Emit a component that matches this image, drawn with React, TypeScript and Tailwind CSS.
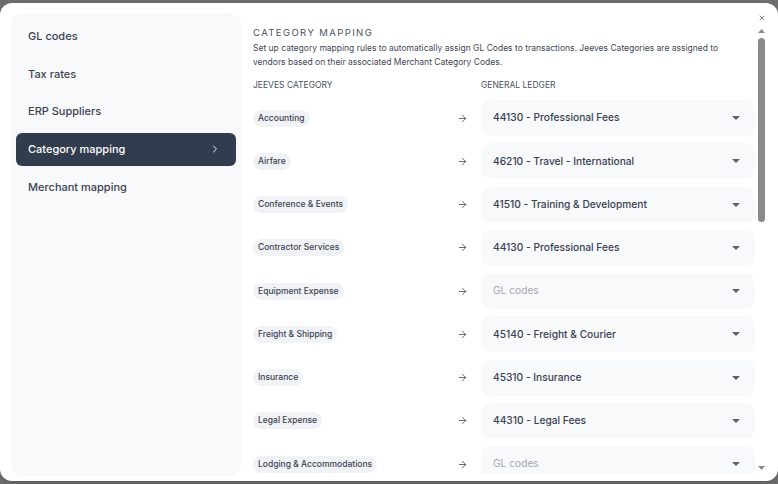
import { ChevronRight, ArrowRight, X } from 'lucide-react';

const navItems = ['GL codes', 'Tax rates', 'ERP Suppliers', 'Category mapping', 'Merchant mapping'];

const rows: { category: string; gl: string | null }[] = [
  { category: 'Accounting', gl: '44130 - Professional Fees' },
  { category: 'Airfare', gl: '46210 - Travel - International' },
  { category: 'Conference & Events', gl: '41510 - Training & Development' },
  { category: 'Contractor Services', gl: '44130 - Professional Fees' },
  { category: 'Equipment Expense', gl: null },
  { category: 'Freight & Shipping', gl: '45140 - Freight & Courier' },
  { category: 'Insurance', gl: '45310 - Insurance' },
  { category: 'Legal Expense', gl: '44310 - Legal Fees' },
  { category: 'Lodging & Accommodations', gl: null },
];

function Caret() {
  return (
    <svg width="8" height="4" viewBox="0 0 8 4" className="shrink-0">
      <path d="M0 0h8L4 4z" fill="#5b6170" />
    </svg>
  );
}

export default function App() {
  const active = 'Category mapping';

  return (
    <div className="h-[484px] w-[778px] overflow-hidden bg-[#6d6d6d] pt-[3px] font-['Inter',sans-serif]">
      <div className="relative flex h-[478px] rounded-[12px] bg-white pl-[11px] pt-[10px] shadow-md">
        <aside className="flex h-[463px] w-[230px] shrink-0 flex-col gap-[4.75px] rounded-[12px] bg-[#f8f9fb] px-[5px] pt-[6.5px]">
          {navItems.map((item) => (
            <div
              key={item}
              className={`flex h-[33px] items-center justify-between rounded-[6px] pl-[12px] pr-[15px] text-[11px] font-medium ${
                item === active ? 'bg-[#323c4f] text-white' : 'text-[#3b4252]'
              }`}
            >
              {item}
              {item === active && <ChevronRight className="h-[12px] w-[12px]" strokeWidth={1.8} />}
            </div>
          ))}
        </aside>

        <main className="ml-[12px] h-[461px] flex-1 overflow-hidden pt-[13px]">
          <h2 className="text-[9.5px] leading-[14px] tracking-[1.4px] text-[#4b5262]">CATEGORY MAPPING</h2>
          <p className="mt-[1px] max-w-[485px] text-[8.5px] leading-[14px] text-[#3f4656]">
            Set up category mapping rules to automatically assign GL Codes to transactions. Jeeves Categories are assigned to vendors based on their associated Merchant Category Codes.
          </p>

          <div className="mt-[10px] flex text-[8.5px] leading-[12px] text-[#4b5262]">
            <span className="w-[228px]">JEEVES CATEGORY</span>
            <span>GENERAL LEDGER</span>
          </div>

          <div className="mt-[9px] flex flex-col gap-[7.25px]">
            {rows.map((r) => (
              <div key={r.category} className="flex h-[36px] items-center">
                <div className="flex w-[204px] items-center">
                  <span className="flex h-[17px] items-center rounded-full bg-[#f1f2f6] px-[5px] text-[8.5px] font-medium text-[#3b4252]">
                    {r.category}
                  </span>
                </div>
                <ArrowRight className="h-[11px] w-[11px] text-[#3b4252]" strokeWidth={1.7} />
                <div className="ml-[13px] flex h-[36px] w-[274px] items-center justify-between rounded-[10px] bg-[#f8f9fb] pl-[12px] pr-[15px]">
                  <span className={`text-[10.2px] font-medium ${r.gl ? 'text-[#374151]' : 'font-normal text-[#a3a8b3]'}`}>
                    {r.gl ?? 'GL codes'}
                  </span>
                  <Caret />
                </div>
              </div>
            ))}
          </div>
        </main>

        <div className="ml-[2px] mr-[12px] flex w-[9px] shrink-0 flex-col items-center pt-[16px]">
          <svg width="7" height="4" viewBox="0 0 7 4">
            <path d="M0 4h7L3.5 0z" fill="#8a8a8a" />
          </svg>
          <div className="mt-[5px] h-[184px] w-[7px] rounded-full bg-[#8a8a8a]" />
          <div className="flex-1" />
          <svg width="7" height="4" viewBox="0 0 7 4" className="mb-[11px]">
            <path d="M0 0h7L3.5 4z" fill="#8a8a8a" />
          </svg>
        </div>

        <button className="absolute right-[12px] top-[11px] text-[#4b5262]">
          <X className="h-[8px] w-[8px]" strokeWidth={2.2} />
        </button>
      </div>
    </div>
  );
}
